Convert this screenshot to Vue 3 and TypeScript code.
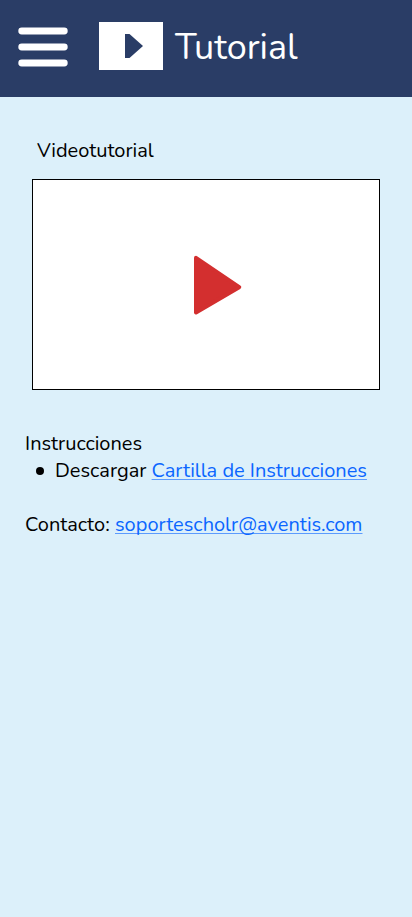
<script setup lang="ts">
const title: string = 'Tutorial'
const email: string = 'soportescholr@aventis.com'
</script>

<template>
  <div class="screen">
    <header class="topbar">
      <button class="menu" aria-label="Menú">
        <svg width="50" height="40" viewBox="0 0 50 40">
          <g fill="#fff">
            <rect x="0.3" y="0.6" width="49.4" height="6.9" rx="3.45" />
            <rect x="0.3" y="16.6" width="49.4" height="6.9" rx="3.45" />
            <rect x="0.3" y="32.6" width="49.4" height="6.9" rx="3.45" />
          </g>
        </svg>
      </button>
      <svg class="badge" width="64" height="48" viewBox="0 0 64 48">
        <rect width="64" height="48" fill="#fff" />
        <path d="M26 12H30.5L44 24L30.5 36H26Z" fill="#2a3d66" />
      </svg>
      <h1 class="title">{{ title }}</h1>
    </header>
    <main class="content">
      <h2 class="subtitle">Videotutorial</h2>
      <div class="video">
        <svg width="48" height="60" viewBox="0 0 48 60">
          <path d="M2 2.8L45.2 32.2L2 57.4Z" fill="#d32f2f" stroke="#d32f2f" stroke-width="4" stroke-linejoin="round" />
        </svg>
      </div>
      <section class="info">
        <p class="heading">Instrucciones</p>
        <ul class="list">
          <li><span class="dot"></span><span class="download">Descargar</span><a class="guide">Cartilla de Instrucciones</a></li>
        </ul>
        <p class="contact"><span class="label">Contacto:</span><a class="mail">{{ email }}</a></p>
      </section>
    </main>
  </div>
</template>

<style>
body {
  background: #dcf0fa;
}
</style>

<style scoped>
.screen {
  min-height: 917px;
  background: #dcf0fa;
  color: #000;
  font-family: Nunito, Lato, sans-serif;
  font-size: 20px;
  line-height: 27px;
  white-space: nowrap;
}
.topbar {
  display: flex;
  align-items: flex-start;
  height: 97px;
  padding: 22px 0 0 18px;
  box-sizing: border-box;
  background: #2a3d66;
}
.menu {
  display: flex;
  margin: 5px 31px 0 0;
  padding: 0;
  border: 0;
  background: none;
}
.title {
  margin: 1px 0 0 12px;
  color: #fff;
  font-size: 36px;
  font-weight: 400;
  line-height: 49px;
}
.content {
  padding: 40px 32px 0;
}
.subtitle {
  margin: 0 0 15px 5px;
  font-size: 20px;
  font-weight: 400;
}
.video {
  display: flex;
  height: 211px;
  box-sizing: border-box;
  padding: 75px 0 0 161px;
  border: 1px solid #000;
  background: #fff;
}
.info {
  margin: 40px 0 0 -7px;
}
.heading,
.contact,
.list {
  margin: 0;
  padding: 0;
}
.list li {
  display: flex;
  align-items: center;
  padding-left: 11px;
}
.dot {
  width: 8px;
  height: 8px;
  margin: 0 11px 0 0;
  border-radius: 50%;
  background: #000;
}
.download {
  width: 96.6px;
}
.contact {
  display: flex;
  margin-top: 27px;
}
.label {
  width: 90px;
}
a {
  color: #0b66ff;
  text-decoration: underline;
  text-decoration-color: #5c9bfd;
  text-decoration-thickness: 1px;
  text-underline-offset: 2px;
  text-decoration-skip-ink: none;
}
</style>
